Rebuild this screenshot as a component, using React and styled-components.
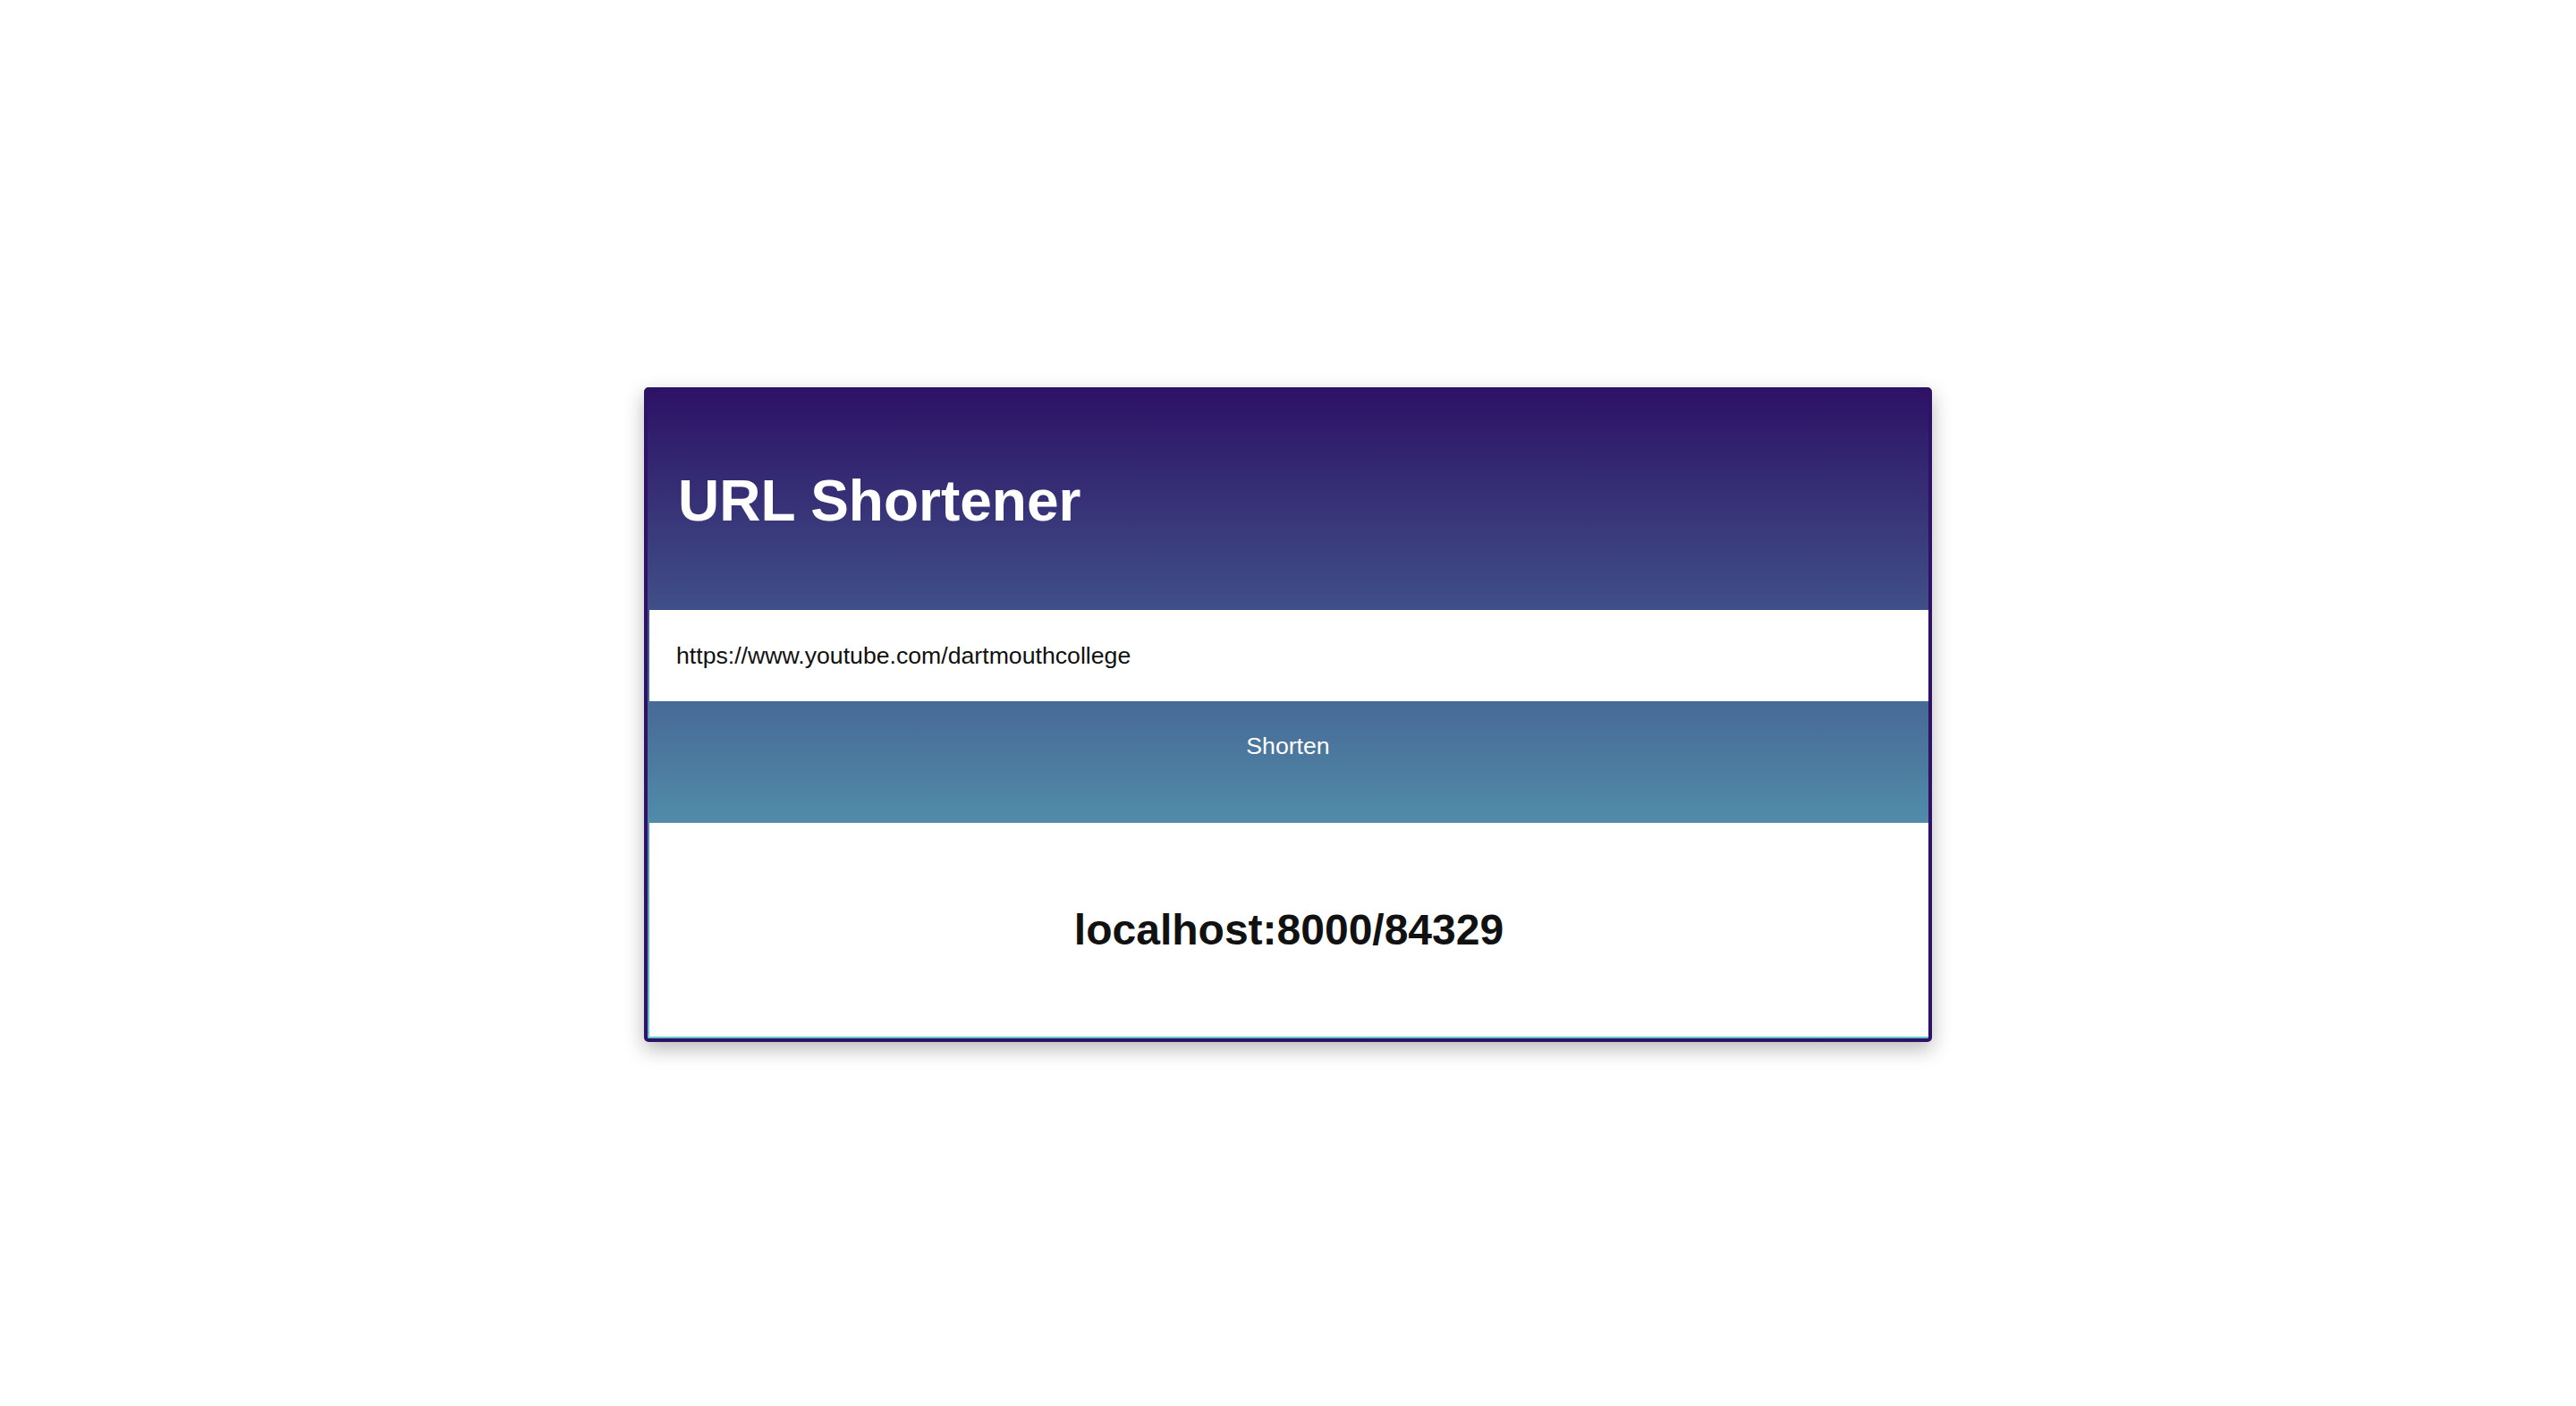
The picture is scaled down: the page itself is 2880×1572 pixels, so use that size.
import React, { useState } from "react";
import styled, { createGlobalStyle } from "styled-components";

const GlobalStyle = createGlobalStyle`
  html, body {
    margin: 0;
    padding: 0;
    background-color: #ffffff;
    font-family: "Liberation Sans", Arial, Helvetica, sans-serif;
  }
`;

function App() {
  const [url, setUrl] = useState("https://www.youtube.com/dartmouthcollege");
  const [shortUrl] = useState("localhost:8000/84329");

  const onUrlHandler = (event) => {
    setUrl(event.currentTarget.value);
  };

  const onSubmitHandler = (event) => {
    event.preventDefault();
  };

  return (
    <Wrapper>
      <GlobalStyle />
      <Card>
        <Header>
          <Title>URL Shortener</Title>
        </Header>
        <Form onSubmit={onSubmitHandler}>
          <UrlInput type="text" value={url} onChange={onUrlHandler} />
          <ShortenButton type="submit">Shorten</ShortenButton>
        </Form>
        <Result>
          <ResultText>{shortUrl}</ResultText>
        </Result>
      </Card>
    </Wrapper>
  );
}

const Wrapper = styled.div`
  width: 100%;
  min-height: 100vh;
  display: flex;
  justify-content: center;
  align-items: flex-start;
  padding-top: 433px;
  box-sizing: border-box;
`;

const Card = styled.div`
  width: 1440px;
  box-sizing: border-box;
  display: flex;
  flex-direction: column;
  border: 4px solid #2d1266;
  border-radius: 5px;
  overflow: hidden;
  background: linear-gradient(to bottom, #2e1266 0%, #62c8ca 100%);
  box-shadow: 0 8px 22px rgba(0, 0, 0, 0.28);
`;

const Header = styled.div`
  height: 245px;
  display: flex;
  align-items: center;
  padding-left: 34px;
  box-sizing: border-box;
`;

const Title = styled.h1`
  margin: 0;
  font-size: 64px;
  font-weight: 700;
  color: #ffffff;
`;

const Form = styled.form`
  display: flex;
  flex-direction: column;
`;

const UrlInput = styled.input`
  height: 102px;
  margin-left: 2px;
  padding: 0 0 0 30px;
  border: none;
  outline: none;
  background-color: #ffffff;
  font-family: "Liberation Sans", Arial, Helvetica, sans-serif;
  font-size: 26.67px;
  color: #111111;
  box-sizing: border-box;
`;

const ShortenButton = styled.button`
  height: 136px;
  padding: 35px 0 0;
  border: none;
  background: transparent;
  display: flex;
  justify-content: center;
  align-items: flex-start;
  font-family: "Liberation Sans", Arial, Helvetica, sans-serif;
  font-size: 26.67px;
  color: #ffffff;
  cursor: pointer;
  box-sizing: border-box;
`;

const Result = styled.div`
  height: 239px;
  margin: 0 0 2px 2px;
  background-color: #ffffff;
  display: flex;
  justify-content: center;
  align-items: center;
`;

const ResultText = styled.h2`
  margin: 0;
  font-size: 48px;
  font-weight: 700;
  color: #111111;
`;

export default App;
